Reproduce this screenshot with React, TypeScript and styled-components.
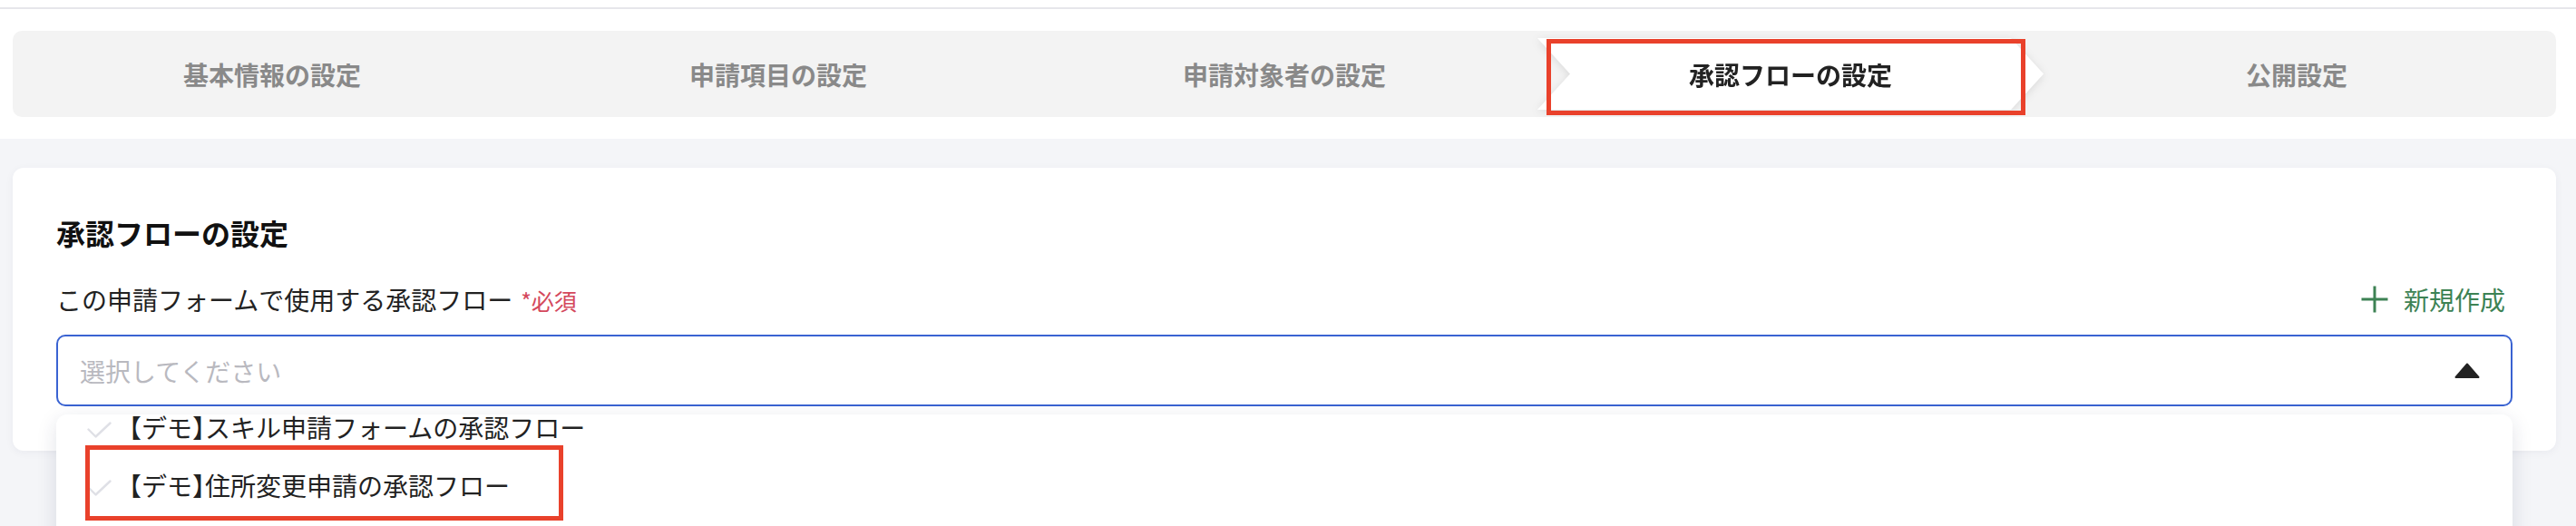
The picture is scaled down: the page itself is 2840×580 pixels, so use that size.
import React from "react";
import styled, { createGlobalStyle } from "styled-components";

const GlobalStyle = createGlobalStyle`
  html, body {
    margin: 0;
    padding: 0;
    background: #f4f5f8;
    font-family: "Noto Sans CJK JP", "Noto Sans", sans-serif;
    color: #222;
  }
  * { box-sizing: border-box; }
`;

const Page = styled.div`
  min-height: 100vh;
  display: flex;
  flex-direction: column;
`;

const TopBar = styled.div`
  height: 10px;
  background: #fff;
  border-bottom: 2px solid #e6e6eb;
`;

const StepSection = styled.section`
  background: #fff;
  padding: 24px 22px 24px 14px;
`;

const StepBar = styled.ol`
  list-style: none;
  margin: 0;
  display: flex;
  height: 95px;
  padding: 8px 7px;
  background: #f3f3f3;
  border-radius: 10px;
`;

const StepSlot = styled.li`
  flex: 1;
  position: relative;
`;

const StepShadow = styled.div<{ $active?: boolean }>`
  height: 100%;
  filter: ${(p) => (p.$active ? "drop-shadow(0 2px 5px rgba(0,0,0,0.10))" : "none")};
`;

const StepShape = styled.div<{ $active?: boolean }>`
  height: 100%;
  display: flex;
  align-items: center;
  justify-content: center;
  font-size: 28px;
  font-weight: 700;
  line-height: 1;
  color: ${(p) => (p.$active ? "#222" : "#898989")};
  background: ${(p) => (p.$active ? "#fff" : "transparent")};
  clip-path: ${(p) =>
    p.$active
      ? "polygon(0 0, calc(100% - 36px) 0, 100% 50%, calc(100% - 36px) 100%, 0 100%, 36px 50%)"
      : "none"};
`;

const Highlight = styled.div<{ $left: number; $top: number; $w: number; $h: number }>`
  position: absolute;
  left: ${(p) => p.$left}px;
  top: ${(p) => p.$top}px;
  width: ${(p) => p.$w}px;
  height: ${(p) => p.$h}px;
  border: 5px solid #e9412b;
  pointer-events: none;
`;

const Main = styled.main`
  flex: 1;
  background: #f4f5f8;
  padding: 32px 22px 0 14px;
`;

const Card = styled.div`
  background: #fff;
  border-radius: 12px;
  box-shadow: 0 2px 10px rgba(30, 40, 80, 0.05);
  padding: 48px 48px 49px;
`;

const Title = styled.h2`
  margin: 0 0 30px;
  font-size: 32px;
  line-height: 46px;
  font-weight: 700;
  color: #111;
`;

const LabelRow = styled.div`
  display: flex;
  align-items: center;
  justify-content: space-between;
  height: 42px;
  margin-bottom: 18px;
`;

const Label = styled.label`
  font-size: 28px;
  line-height: 42px;
  color: #222;
`;

const Required = styled.span`
  margin-left: 9px;
  font-size: 25px;
  color: #d4485c;
`;

const CreateButton = styled.button`
  display: flex;
  align-items: center;
  gap: 17px;
  padding: 0 8px 0 0;
  border: none;
  background: none;
  font-family: inherit;
  font-size: 28px;
  line-height: 42px;
  color: #3d8254;
  cursor: pointer;
`;

const SelectWrap = styled.div`
  position: relative;
`;

const SelectBox = styled.div`
  height: 79px;
  border: 2px solid #3a63d2;
  border-radius: 10px;
  display: flex;
  align-items: center;
  justify-content: space-between;
  padding: 0 34px 0 24px;
`;

const Placeholder = styled.span`
  font-size: 28px;
  color: #b9b9bf;
`;

const Dropdown = styled.div`
  position: absolute;
  top: calc(100% + 9px);
  left: 0;
  right: 0;
  height: 300px;
  background: #fff;
  border-radius: 12px;
  box-shadow: 0 6px 22px rgba(30, 40, 80, 0.13);
  overflow: hidden;
`;

const OptionList = styled.ul`
  list-style: none;
  margin: -18px 0 0;
  padding: 0;
`;

const Option = styled.li`
  position: relative;
  height: 64px;
  display: flex;
  align-items: center;
  gap: 19px;
  padding-left: 34px;
  font-size: 28px;
  color: #222;
`;

const OptionText = styled.span`
  white-space: nowrap;
`;

const Bracket = styled.span`
  font-feature-settings: "halt";
`;

const CheckIcon = styled.svg`
  flex: none;
  margin-top: 6px;
`;

const Check = () => (
  <CheckIcon width="27" height="18" viewBox="0 0 27 18" fill="none">
    <polyline points="1.5,8.5 9.5,16.5 25.5,1.5" stroke="#dfe0e6" strokeWidth="2.4" strokeLinecap="round" strokeLinejoin="round" />
  </CheckIcon>
);

const Plus = () => (
  <svg width="30" height="30" viewBox="0 0 30 30" fill="none">
    <path d="M15 0.5V29.5M0.5 15H29.5" stroke="#3d8254" strokeWidth="3" />
  </svg>
);

const Caret = () => (
  <svg width="28" height="18" viewBox="0 0 28 18">
    <path d="M14 1.5 L26.5 16 H1.5 Z" fill="#222" stroke="#222" strokeWidth="2" strokeLinejoin="round" />
  </svg>
);

const steps = ["基本情報の設定", "申請項目の設定", "申請対象者の設定", "承認フローの設定", "公開設定"];
const activeStep = 3;

const options = [
  { tag: "デモ", name: "スキル申請フォームの承認フロー" },
  { tag: "デモ", name: "住所変更申請の承認フロー" },
];
const highlightedOption = 1;

export default function App() {
  return (
    <>
      <GlobalStyle />
      <Page>
        <TopBar />
        <StepSection>
          <StepBar>
            {steps.map((s, i) => (
              <StepSlot key={s}>
                <StepShadow $active={i === activeStep}>
                  <StepShape $active={i === activeStep}>{s}</StepShape>
                </StepShadow>
                {i === activeStep && <Highlight $left={10} $top={1} $w={528} $h={84} />}
              </StepSlot>
            ))}
          </StepBar>
        </StepSection>
        <Main>
          <Card>
            <Title>承認フローの設定</Title>
            <LabelRow>
              <Label>
                この申請フォームで使用する承認フロー<Required>*必須</Required>
              </Label>
              <CreateButton type="button">
                <Plus />
                新規作成
              </CreateButton>
            </LabelRow>
            <SelectWrap>
              <SelectBox>
                <Placeholder>選択してください</Placeholder>
                <Caret />
              </SelectBox>
              <Dropdown>
                <OptionList>
                  {options.map((o, i) => (
                    <Option key={o.name}>
                      <Check />
                      <OptionText>
                        <Bracket>【</Bracket>
                        {o.tag}
                        <Bracket>】</Bracket>
                        {o.name}
                      </OptionText>
                      {i === highlightedOption && <Highlight $left={32} $top={-12} $w={527} $h={83} />}
                    </Option>
                  ))}
                </OptionList>
              </Dropdown>
            </SelectWrap>
          </Card>
        </Main>
      </Page>
    </>
  );
}
